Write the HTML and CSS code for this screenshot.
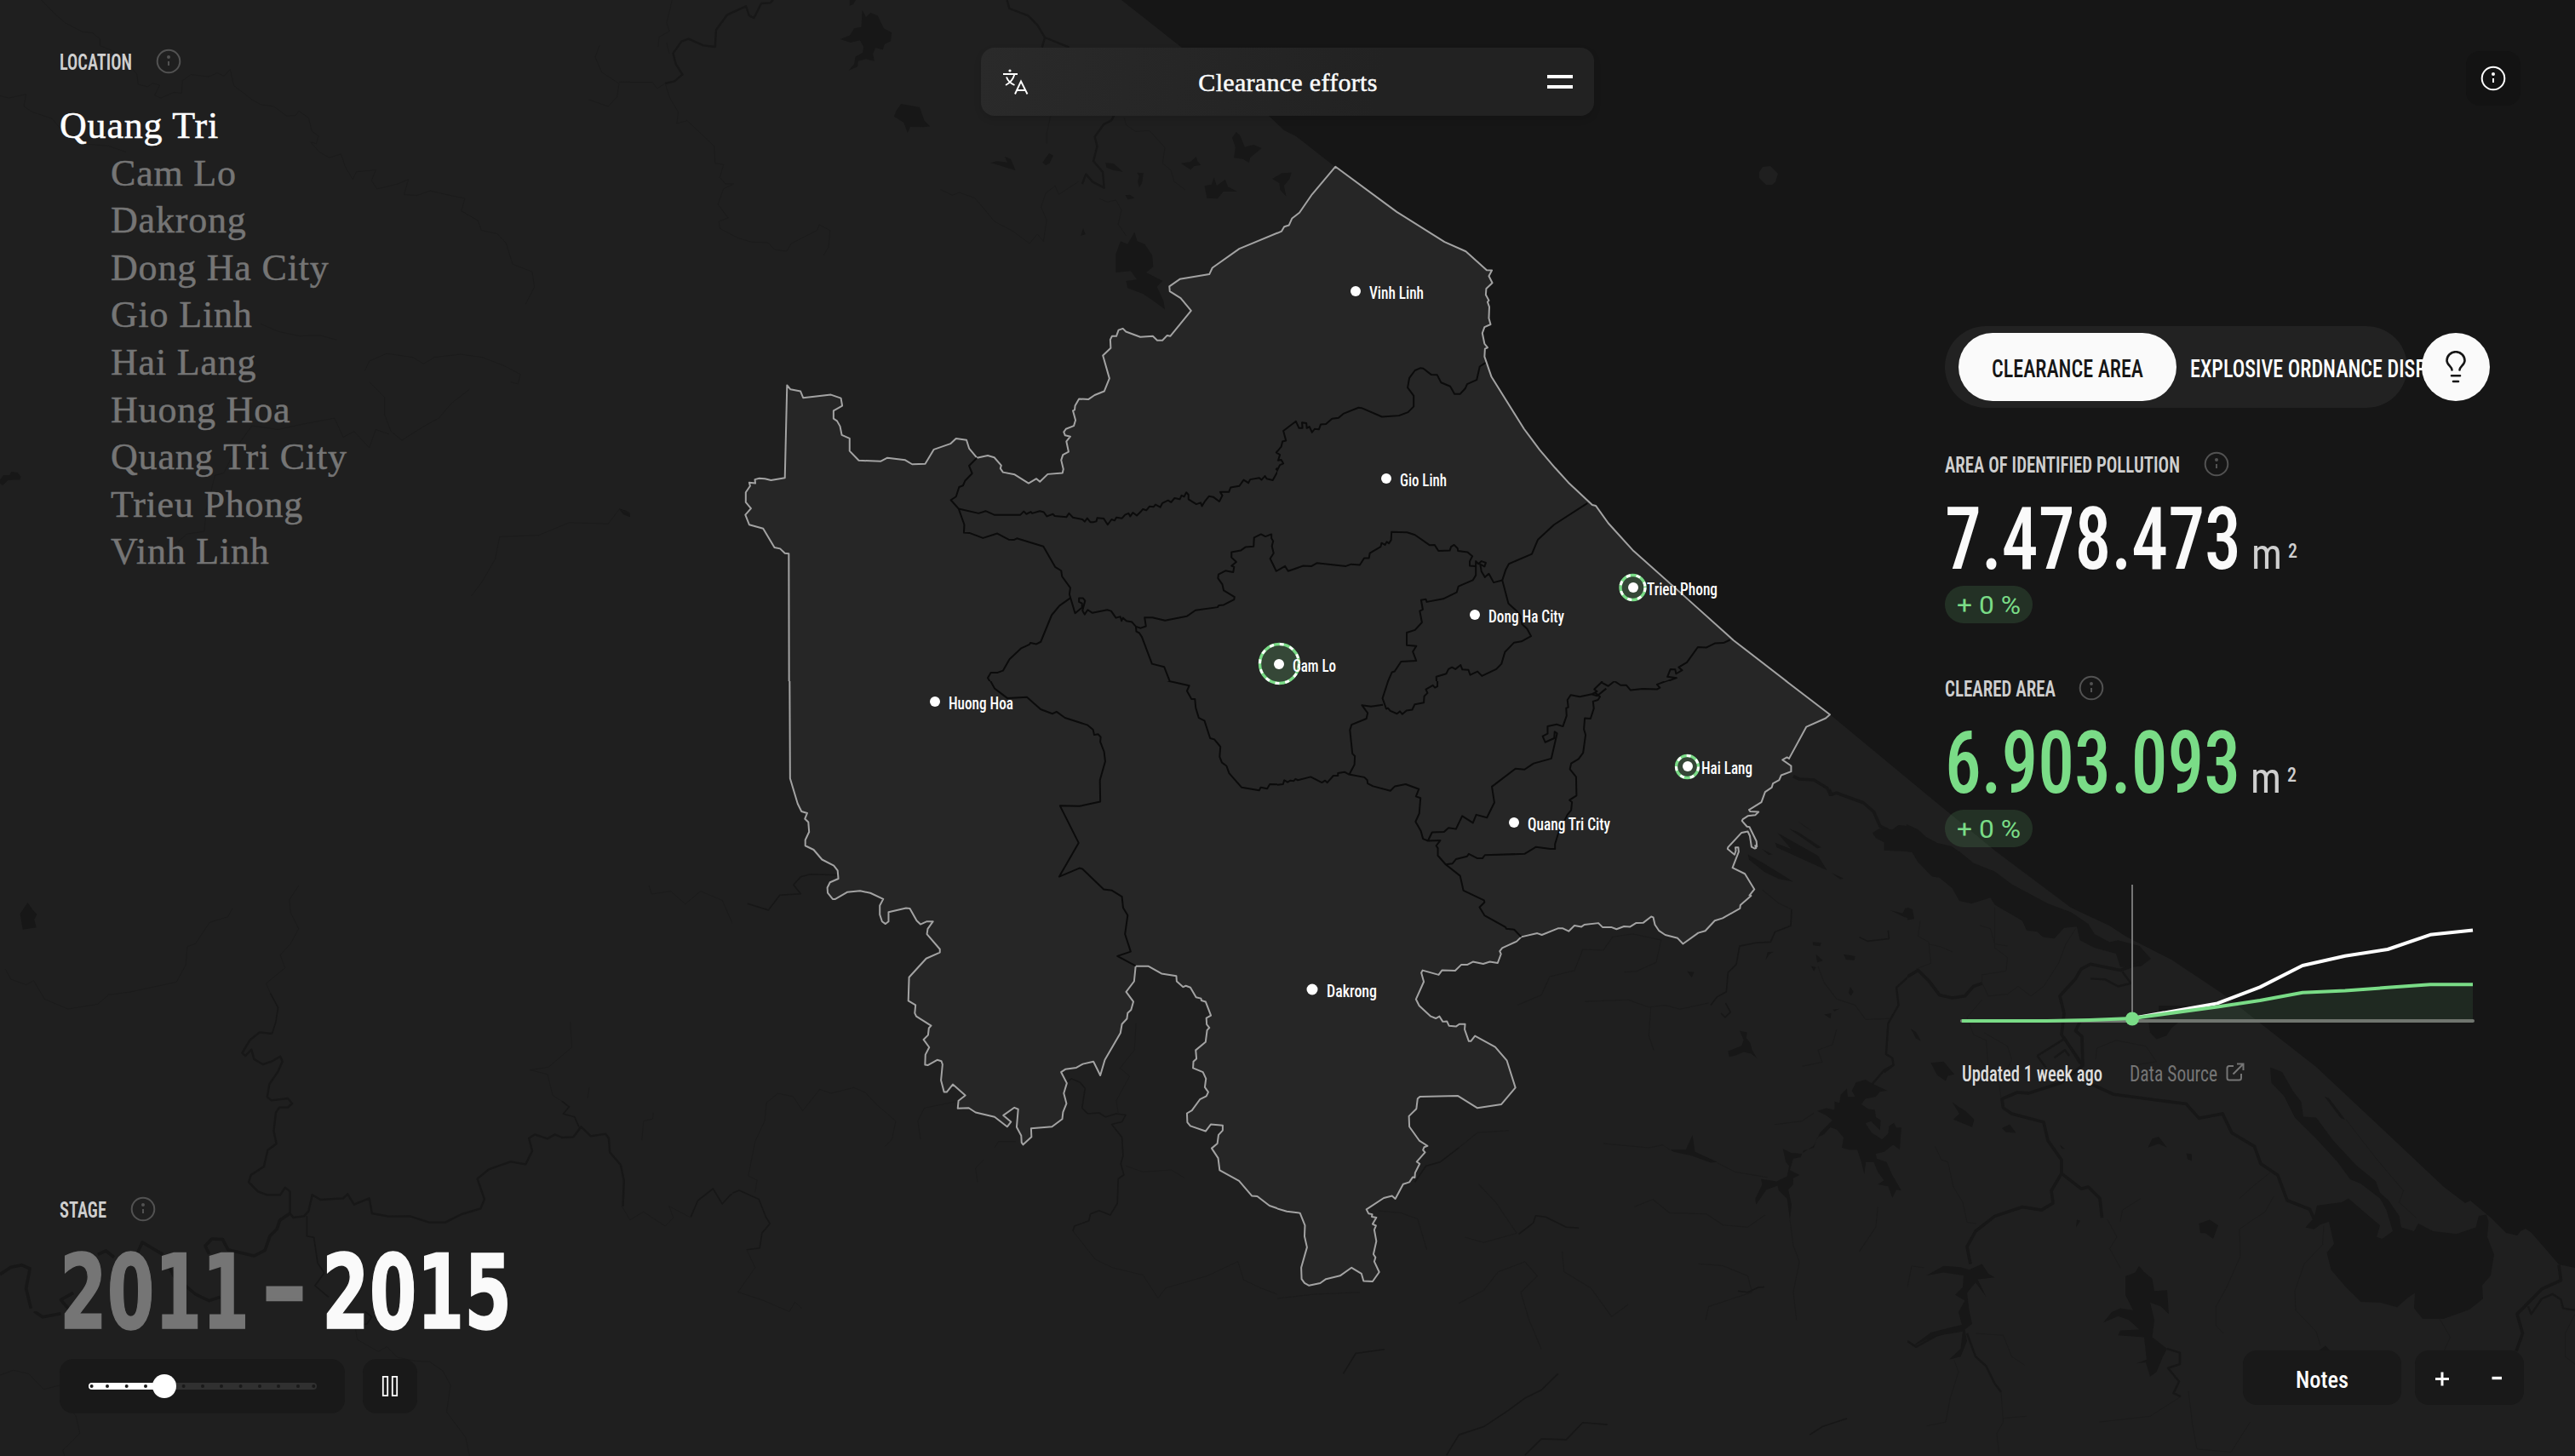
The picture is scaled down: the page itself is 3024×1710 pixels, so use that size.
FILE: index.html
```html
<!DOCTYPE html>
<html lang="en">
<head>
<meta charset="utf-8">
<title>Clearance efforts</title>
<link rel="stylesheet" href="styles.css">
</head>
<body>
<div class="app">

<svg class="map" width="3024" height="1710" viewBox="0 0 3024 1710">
  <!-- inland water, north -->
  <svg x="0" y="0" width="740" height="700" viewBox="0 0 1450.4 1568" preserveAspectRatio="none">
    <path class="lake" d="M0 1262L8 1250L22 1250L26 1241L40 1243L48 1254L46 1262L30 1262L18 1264L6 1277L0 1272ZM1425 1338L1440 1343L1466 1361L1450 1360L1434 1353Z"/>
    <path class="brook" d="M95 0L125 35L150 60L190 84L212 86L230 102L230 120L262 135L290 160L315 195L318 222L340 228L352 219L368 224L356 250L370 258L400 243L418 245L420 212L440 196L480 202L500 192L516 200L530 182L538 225L580 262L600 275L630 280L660 305L680 304L688 292L710 310L718 345L733 358L728 378L715 374L735 400L758 415L785 405L795 440L812 472L820 452L865 447L855 475L868 497L915 484L940 472L930 512L960 514L990 502L1040 515L1070 522L1062 555L1100 580L1108 606L1145 615L1165 640L1180 695L1225 715L1230 755L1210 800"/>
    <path class="brook" d="M0 252L20 258L60 248L55 280L75 295L120 312L140 340L190 378L250 384L290 400M600 852L640 872L690 884L735 882L775 894M840 975L850 950L890 930L950 940L975 957L1000 940L1060 932L1110 940L1160 962L1198 985L1192 1010L1175 1005M850 1005L885 1045L885 1090L900 1135L925 1158L975 1122L1010 1100L1040 1060L1080 1025M545 1175L580 1120L640 1130L700 1115L770 1100L790 1150L815 1135L850 1178L865 1130L895 1142M1085 1568L1110 1530L1140 1470L1150 1412L1240 1408L1310 1375L1400 1378L1425 1340L1470 1361L1520 1355L1540 1325L1515 1310L1505 1270L1530 1245L1568 1243M1380 120L1370 150L1385 190L1425 220L1420 255L1400 280L1355 262M1425 216L1500 215L1515 232"/>
    <path class="brook" d="M410 1425L430 1405L470 1398L475 1340L495 1250L515 1245L545 1175"/>
  </svg>
  <svg x="740" y="0" width="860" height="700" viewBox="0 0 1568 2100" preserveAspectRatio="none">
    <path class="river" d="M306 0L300 10L281 12L265 63L255 55L248 22L208 52L184 106L182 165L157 160L125 137L110 146L92 188L98 226L112 262L95 286L75 294"/>
    <path class="river" d="M807 0L812 30L852 55L872 88L888 132L940 167M888 132L882 167M1036 408L1030 425L1014 438L995 482L1000 515L992 568L1012 606L1015 662L990 640L976 614L968 648"/>
    <path class="brook" d="M0 290L48 290L58 312L75 294L85 345L103 395L100 435L122 425L180 515L182 575L200 580L192 625L204 648L222 648L200 665L188 720L210 768L190 780L192 805L230 838L260 853L295 855L310 880L335 885L345 858L400 812L405 792L428 812L425 870L414 900M665 668L690 688L705 678L738 698L755 730L780 780L820 815L855 858L872 825L885 850L892 775L880 730L890 680L910 655L918 685L960 640M1058 415L1062 440L1082 463L1112 460L1145 520L1140 575L1158 600L1165 640L1188 668M1005 700L1022 712L1040 705L1052 740L1045 790L1062 830M900 410L892 470L892 505M90 0L78 80L84 110L62 130L60 165M78 150L84 190"/>
    <path class="lake" d="M497 35L505 60L515 45L530 55L543 100L560 115L558 145L545 155L541 175L525 168L520 190L523 215L505 208L488 215L487 235L468 248L480 225L482 200L498 185L500 165L492 142L472 150L450 138L470 125L480 100L495 95ZM470 0L483 0L478 15L470 20ZM580 366L600 372L620 378L630 425L642 445L628 448L600 447L594 468L586 432L565 410L570 390ZM802 552L815 560L825 600L808 592L785 580L772 574L785 568L808 572ZM897 540L906 548L898 575L890 582L883 572ZM1018 574L1035 576L1055 605L1035 600L1020 590ZM1085 608L1099 610L1096 645L1090 660L1087 640L1090 620ZM1060 688L1070 686L1080 698L1066 703ZM1298 465L1306 478L1316 518L1335 510L1352 522L1328 555L1325 573L1312 560L1293 556L1296 520L1289 485ZM1180 575L1200 570L1212 552L1215 568L1222 582L1208 585L1200 598L1188 585ZM1250 625L1256 655L1274 632L1280 658L1300 675L1270 675L1258 700L1235 698L1230 655L1245 650ZM1375 630L1396 610L1416 608L1412 630L1400 655L1405 692L1392 670L1390 645ZM970 805L975 826L965 830Z"/>
    <path class="lake" d="M1080 818L1086 850L1102 860L1118 900L1120 940L1105 960L1140 990L1128 1010L1142 1060L1145 1090L1120 1060L1098 1035L1065 1015L1062 990L1085 985L1072 955L1040 960L1040 895L1050 850L1065 860Z"/>
  </svg>
  <svg x="0" y="1040" width="860" height="500" viewBox="0 0 1348.5 1500" preserveAspectRatio="none">
    <path class="lake" d="M51 60L60 85L68 102L63 120L67 148L42 155L37 100Z"/>
    <path class="brook" d="M550 0L533 50L535 95L550 152L535 205L516 245L525 290L490 345L498 380M428 80L420 110L386 130L360 205L345 215L342 280L325 340L240 375L200 385L180 418L125 435L82 400L62 335L48 350L20 330L10 295M1050 480L1053 570L1010 640L976 650L1008 665L1018 740L1035 760M1085 710L1082 750M1203 800L1202 822L1185 830L1182 898M1145 1130L1160 1178L1185 1150L1225 1200L1240 1170L1232 1130L1270 1168M1195 0L1200 30L1235 20L1262 65L1290 20L1330 52L1355 160L1368 150L1365 70L1400 90"/>
    <path class="river fine" d="M498 380L512 430L508 480L501 522M565 1165L565 1235L578 1240L585 1330L597 1365L580 1410L605 1450M1035 760L1048 780L1037 805L1058 815L1066 850"/>
    <path class="river" d="M501 522L478 517L460 545L446 590L452 600L463 578L468 612L484 630L500 620L516 602L520 620L512 655L496 700L492 745L500 757L530 750L538 768L530 782L514 782L508 800L504 865L509 910L493 932L486 990L462 1020L458 1045L475 1078L492 1090L516 1090L525 1064L534 1078L534 1155L540 1170L560 1165L568 1148L575 1090L590 1107L632 1102L640 1087L652 1124L680 1102L685 1155L715 1166L755 1165L790 1187L820 1187L850 1158L885 1138L892 1105L879 1033L900 1000L940 973L968 982L980 935L974 890L985 877L1008 892L1022 877L1035 888L1056 886L1070 850L1088 883L1115 875L1121 890L1123 940L1143 985L1149 1040L1147 1130"/>
    <path class="river bold" d="M534 1155L515 1180L510 1210L497 1235L488 1285L468 1305L420 1283L410 1247L390 1245L378 1270L385 1298M0 1370L20 1345L40 1337L55 1350L48 1420L57 1490M180 1300L195 1287L210 1310M252 1300L262 1257L300 1300M308 1330L320 1375L360 1440L385 1463L405 1450M130 1500L112 1460L135 1435"/>
    <path class="river fine" d="M1272 1168L1285 1110L1313 1068L1330 1122L1345 1090L1362 1075"/>
  </svg>
  <svg x="860" y="1000" width="640" height="550" viewBox="0 418 1433.6 1150" preserveAspectRatio="none">
    <path class="river fine" d="M280 476L205 474L180 480L161 500L180 522L125 525L95 562L40 546M0 1257L18 1250L70 1272L88 1315L99 1332L78 1355L72 1392L38 1396M880 985L892 976L915 985L928 1000L920 1048L935 1062L965 1060L982 1070L1010 1062L1035 1065L1025 1082L998 1088L1025 1120L1028 1165L1022 1185L1030 1212L1015 1222L1013 1282L994 1311L965 1300L942 1308L938 1325L900 1338L896 1350"/>
    <path class="brook" d="M896 1350L955 1420L1000 1440L1080 1458L1120 1515L1140 1490L1250 1460L1330 1425L1345 1470L1390 1490L1433 1505M1062 840L1058 905L1020 950L1045 970L1010 1030L1015 1060M60 1255L65 1225L42 1215L60 1130L85 1080L90 1035L120 1012L160 1020L185 1055L230 1002L260 1012L320 998L350 1010L380 1040L430 1080L420 1125L402 1142M495 1125L488 1080L505 1048L590 1032M745 1130L700 1130L690 1145M662 1175L640 1195L645 1230M1035 1190L1080 1205L1155 1200L1190 1220M38 1396L60 1440L15 1500L80 1520L150 1548L165 1525L183 1540"/>
  </svg>
  <svg x="1500" y="860" width="740" height="850" viewBox="0 125 1526.6 1777" preserveAspectRatio="none">
    <path class="river bold" d="M1250 233L1265 240L1300 242L1332 262L1340 278L1355 274L1420 298L1445 320L1460 355L1480 365"/>
    <path class="lake" d="M1442 372L1458 362L1490 364L1505 353L1530 355L1530 418L1470 415L1470 395L1450 385ZM1340 263L1348 280L1336 282ZM1212 372L1310 428L1332 464L1262 432L1210 408L1206 396L1245 412ZM1240 362L1262 370L1318 408L1308 410ZM1140 425L1175 445L1212 468L1250 492L1215 485L1180 468L1143 438ZM1342 470L1372 484L1364 486ZM1260 343L1297 368L1280 358ZM1175 412L1200 425L1190 426Z"/>
    <path class="lake" d="M1485 562L1515 570L1522 556L1540 560L1544 588L1518 578ZM1297 640L1318 642L1315 650L1298 648ZM1372 670L1400 675L1398 685L1378 683ZM1305 670L1322 686L1308 690ZM1293 699L1305 702L1300 712ZM993 712L1010 714L1004 727ZM1388 750L1396 762L1390 772L1384 765ZM1325 818L1342 815L1340 828ZM1346 806L1362 804L1350 810ZM1535 858L1550 860L1560 880L1545 880ZM1183 684L1188 665L1203 664L1192 670Z"/>
    <path class="lake" d="M1120 858L1138 862L1136 876L1146 888L1150 905L1162 925L1148 914L1130 910L1112 918L1095 922L1092 908L1125 895L1130 880ZM930 1136L950 1150L990 1150L1006 1114L1012 1155L1066 1180L1050 1182L1005 1165L960 1155Z"/>
    <path class="lake" d="M1402 985L1425 978L1442 988L1478 1005L1460 1008L1450 1020L1425 1025L1415 1038L1432 1050L1448 1052L1450 1070L1462 1078L1460 1102L1438 1080L1425 1085L1440 1108L1465 1125L1480 1110L1482 1092L1494 1084L1500 1096L1512 1095L1508 1150L1492 1138L1470 1155L1450 1160L1452 1172L1476 1180L1490 1212L1512 1250L1500 1248L1490 1268L1480 1240L1455 1235L1470 1225L1455 1205L1445 1180L1426 1180L1422 1210L1415 1180L1405 1150L1385 1150L1368 1145L1372 1120L1355 1100L1340 1095L1325 1112L1308 1120L1300 1145L1275 1152L1268 1168L1250 1172L1242 1200L1265 1212L1250 1220L1250 1235L1238 1248L1246 1285L1242 1322L1235 1270L1215 1250L1212 1238L1185 1248L1160 1285L1158 1270L1175 1235L1172 1222L1210 1228L1235 1215L1240 1190L1232 1180L1225 1148L1245 1158L1270 1160L1300 1140L1315 1108L1345 1078L1330 1066L1308 1055L1330 1048L1350 1052L1350 1032L1362 1035L1365 1015L1380 1000L1382 1020L1400 1020L1392 1005Z"/>
    <path class="river" d="M1470 960L1493 942L1490 925L1475 915L1480 840L1505 795L1500 752L1540 715L1568 712M1442 988L1470 955L1493 942"/>
    <path class="river fine" d="M1410 628L1430 638L1482 632L1480 612M1050 795L1065 775L1088 762L1092 715L1112 695L1120 650L1160 642L1195 640L1206 615L1244 600L1246 560M1075 815L1085 825L1098 812L1086 790M585 1357L620 1330L626 1312L650 1315L700 1340L730 1342M333 1230L360 1190L395 1180L440 1145M1116 1497L1140 1500L1165 1488L1180 1487"/>
    <path class="brook" d="M1246 560L1215 545L1175 512M582 795L640 770L660 725L720 710L740 658L790 660L812 628L860 620L930 635L918 690L870 712L840 714M745 786L850 782L900 800L940 795L975 805L1045 790M905 800L900 870L912 905M1310 700L1325 740L1355 780L1400 795L1425 830L1485 828M1355 855L1345 892L1310 905L1320 935L1272 945M1205 1088L1270 1080L1300 1060M790 1135L900 1145L935 1138M1066 1182L1110 1205L1188 1218M440 1145L485 1108L560 1103M488 1235L530 1280L580 1355L500 1378L455 1365M865 1290L910 1272L950 1305L1040 1308L1080 1335L1140 1340L1182 1310M1242 1322L1250 1385L1265 1425L1250 1500L1258 1568M1455 1290L1450 1340L1410 1400M1038 1568L1045 1535L1150 1500L1140 1460L1080 1435L1020 1430M440 1527L500 1495L535 1450L600 1425L630 1460L590 1500L610 1568L640 1640M690 1400L695 1450L760 1490L810 1560L850 1530M245 1300L300 1305L340 1320L362 1395M0 1515L90 1505L200 1500"/>
    <path class="river fine" d="M410 1900L440 1850L500 1830L560 1790L600 1760L640 1740L680 1700M600 1900L640 1860L700 1862L740 1820L800 1825M160 1700L190 1650L260 1640M1290 1850L1320 1830L1380 1810"/>
  </svg>
  <svg x="2240" y="1000" width="784" height="710" viewBox="0 0 1568 1568" preserveAspectRatio="none">
    <path class="lake" d="M10 0L122 0L155 30L205 52L245 85L330 135L385 158L425 188L440 215L475 235L495 230L545 245L572 278L548 298L500 300L490 265L440 250L405 230L398 195L368 198L345 226L318 222L305 208L280 205L270 180L205 138L195 120L150 135L122 128L105 95L75 68L58 65L25 28Z"/>
    <path class="river bold" d="M545 290L500 308L430 292L408 305L395 330L358 375L368 420L362 475L412 555L360 600L285 627L258 625L222 642L225 665L245 680L320 702L330 750L362 800L362 835L408 875L425 870L452 900L457 950M362 835L338 880L342 912L315 930L270 922L205 946L160 985L140 1025L148 1070M0 325L25 308L50 335L75 372L105 380L135 375L155 350L175 342M412 555L410 480L395 465L405 442"/>
    <path class="river bold" d="M425 600L485 630L655 655L685 692L740 680L762 730L815 765L830 810L870 840L892 905L945 928L960 965M1530 1072L1535 1112L1490 1135L1432 1200L1445 1250L1430 1296"/>
    <path class="river" d="M430 330L465 332L495 350L525 342L505 312M305 530L370 485L405 550M305 530L325 560M345 535L370 515L380 530M1458 1180L1465 1200L1490 1160L1515 1148L1535 1162L1540 1185L1568 1190M0 1270L20 1285L70 1255L125 1235M140 1250L160 1310L185 1335L205 1380L220 1402M610 1290L640 1300L640 1330L612 1340L638 1375L625 1405L642 1414"/>
    <path class="lake" d="M852 560L880 572L905 620L925 650L930 688L960 690L975 712L1000 750L1055 815L1100 855L1110 885L1130 905L1155 945L1160 975L1190 985L1200 965L1235 985L1290 992L1335 975L1342 945L1360 942L1365 960L1362 1000L1378 1045L1370 1100L1350 1125L1352 1160L1320 1188L1260 1212L1210 1212L1190 1185L1192 1145L1175 1158L1150 1182L1110 1170L1065 1168L1030 1130L995 1085L985 1040L1002 1018L990 960L970 968L955 980L935 975L955 950L962 918L1020 910L1036 900L1110 970L1102 1000L1115 1005L1140 985L1125 930L1110 900L1065 862L1040 850L1010 805L960 745L910 690L885 635L855 600Z"/>
    <path class="lake" d="M980 636L990 640L1028 695L1018 692ZM590 400L660 400L660 412L590 418ZM566 440L640 440L620 458L608 478L585 487L570 470ZM55 548L85 545L110 578L95 582L90 595L70 580ZM105 650L120 662L135 672L157 695L152 715L108 695L122 680ZM222 718L240 708L255 730L232 728ZM565 768L575 745L590 740L610 768L590 758ZM655 783L668 785L668 803L658 798ZM685 965L710 955L730 970L718 1005L700 990L688 990ZM398 955L406 958L396 975ZM8 460L20 468L32 492L20 485ZM358 760L370 772L362 770ZM0 145L12 150L16 175L0 178ZM967 1294L982 1282L992 1294Z"/>
    <path class="lake" d="M544 1075L555 1090L575 1108L580 1140L610 1138L614 1200L595 1180L570 1170L580 1215L575 1260L610 1290L600 1310L585 1350L570 1362L560 1325L538 1328L562 1318L556 1260L495 1255L500 1242L545 1240L520 1215L495 1205L460 1222L480 1195L500 1185L530 1190L512 1150L512 1102L535 1092Z"/>
    <path class="lake" d="M45 1100L85 1075L125 1078L145 1085L175 1070L190 1095L205 1105L165 1110L185 1155L160 1118L140 1145L145 1190L152 1225L135 1240L140 1270L125 1310L98 1318L125 1290L130 1245L60 1258L10 1285L55 1248L100 1235L128 1228L120 1195L135 1165L112 1150L130 1130L132 1100L85 1092Z"/>
    <path class="brook" d="M65 765L80 800L95 805L108 870L130 910L140 962L162 965M205 145L205 250L235 275L232 310L175 320L175 340L190 375L235 370L260 350L290 375L320 350L355 290L372 240L395 200M170 192L195 200L205 240L235 245M30 180L25 220L50 235L55 290L20 305M50 240L80 248L105 260M175 385L140 430L155 475L185 490L190 560L215 600L220 640M180 470L235 505L245 540L232 570M442 540L445 510L490 490L560 505L585 545L530 555M1030 695L1100 795L1165 880L1155 910L1195 950M855 830L810 870L780 900M860 895L840 935L805 960L780 980L782 1050L750 1130L725 1180L725 1230L742 1250M978 970L975 1020L932 1070L910 1140L912 1190L960 1245L970 1282M470 955L492 1000L475 1030L500 1080M548 900L505 930L500 960M45 1490L90 1480L100 1420L120 1350L110 1320M220 1402L225 1480L210 1510L215 1560M160 1250L225 1255L245 1310L275 1332M642 1414L570 1465L450 1480M660 1400L670 1490L680 1550L760 1558L805 1480M1250 1212L1275 1260L1260 1296M1568 1200L1545 1250L1545 1310L1568 1330M280 1465L225 1470M0 1130L10 1075L40 1080"/>
  </svg>
  <svg x="0" y="1540" width="860" height="170" viewBox="0 480 1926.4 510" preserveAspectRatio="none">
    <path class="river bold" d="M90 480L112 500L160 488M540 480"/>
    <path class="brook" d="M0 705L35 688L75 700L115 755L160 740L168 795L200 850L210 910L165 970L170 990M935 540L940 580L995 622L1018 605L1045 642L1090 655L1130 658L1165 690L1185 740L1175 835L1225 925L1235 990"/>
    <path class="river fine" d="M900 430L950 470L978 500L965 525L935 530"/>
  </svg>

  <path class="sea" d="M1317 0L1388 56L1490 136L1508 153L1522 160L1568 196L1600 420L1740 480L2050 800L2149 839L2260 931L2344 1000L2432 1066L2477 1087L2497 1100L2550 1127L2610 1167L2720 1253L2800 1328L2870 1394L2895 1413L2901 1410L2925 1430L2943 1448L2956 1451L2960 1446L2966 1443L2973 1448L3005 1485L3024 1489V0Z"/>
  <path class="lake" d="M2239 968L2252 974L2262 983L2275 990L2292 994L2302 1001L2244 1001L2239 1000Z"/>
  <path class="islet" d="M2066 202L2070 196L2079 195L2088 204L2085 214L2081 217L2074 217L2066 209Z"/>

  <!-- province, north-west -->
  <svg x="860" y="160" width="640" height="640" viewBox="0 0 1254.4 1433.6" preserveAspectRatio="none">
    <path class="province" d="M131 1600L130 1098L121 1097L110 1085L97 1082L71 1032L39 1022L30 996L43 979L31 963L31 937L41 920L39 911L53 913L52 903L62 900L75 901L89 905L121 899L126 655L134 666L157 671L163 688L227 680L250 689L253 709L233 722L233 743L241 749L248 763L252 786L270 795L270 828L291 853L342 855L357 846L398 852L414 863L444 862L464 824L502 809L515 795L539 799L545 821L563 846L588 840L603 845L619 866L617 874L623 884L650 890L682 913L700 901L708 909L726 889L760 886L762 876L757 852L761 838L774 830L769 803L778 790L766 787L763 778L768 770L786 762L790 747L784 722L788 720L789 709L798 691L820 692L834 681L856 671L868 637L853 577L871 557L870 535L874 526L884 526L889 510L899 506L906 514L939 528L968 526L978 537L990 537L1001 524L1008 526L1056 459L1032 426L1007 408L1006 395L1030 376L1098 363L1105 346L1167 296L1264 250L1270 238L1281 234L1288 216L1304 201L1336 150L1389 80L1700 80L1700 1600Z"/>
    <path class="district" d="M563 846L545 867L552 887L536 906L531 919L522 923L515 948L503 957L521 980L567 992L583 986L603 996L663 996L671 987L677 994L687 988L690 992L708 986L717 989L724 1000L738 994L742 999L769 1002L775 992L784 1003L806 1008L811 1014L817 1005L824 1015L832 1015L838 1013L840 1004L855 1006L864 1022L873 1008L880 1011L884 1003L897 1005L904 996L912 992L916 1000L922 990L931 998L940 988L945 981L953 984L960 974L970 975L974 969L985 976L990 965L1003 958L1010 963L1018 952L1030 955L1034 945L1040 948L1045 937L1050 943L1050 955L1068 968L1078 964L1081 973L1088 960L1097 947L1107 949L1121 961L1128 945L1123 936L1143 936L1147 924L1167 920L1177 904L1188 912L1192 903L1213 899L1218 904L1226 894L1230 901L1244 905L1256 880L1252 876L1268 861L1263 851L1256 853L1260 838L1252 832L1263 817L1266 803L1274 801L1268 775L1298 750"/>
    <path class="district" d="M521 980L534 1022L533 1043L547 1044L577 1057L610 1045L636 1061L648 1062L655 1058L716 1079L743 1133L757 1143L759 1158L778 1188L776 1205L789 1255L805 1240L805 1229L798 1225L798 1215L807 1215L812 1222L806 1248L811 1258L818 1246L829 1254L863 1246L872 1249L883 1267L893 1264L896 1275L899 1267L907 1275L920 1278L929 1290L940 1294L952 1289L949 1266L967 1266L996 1274L1046 1263L1066 1247L1117 1239L1120 1234L1131 1233L1155 1219L1156 1212L1131 1195L1128 1179L1118 1163L1119 1153L1135 1143L1153 1147L1155 1133L1149 1130L1160 1120L1149 1108L1149 1094L1170 1090L1181 1081L1200 1079L1201 1056L1217 1047L1227 1053L1241 1047L1241 1058L1245 1065L1242 1078L1246 1097L1238 1111L1252 1144L1272 1131"/>
    <path class="district" d="M778 1215L753 1235L735 1260L710 1330L700 1336L686 1333L684 1337L665 1347L638 1376L623 1406L611 1411L595 1411L588 1425L602 1451L633 1477M929 1290L930 1303L937 1307L943 1318L966 1388L994 1396L1007 1434L1051 1445"/>
  </svg>
  <!-- province, north-east -->
  <svg x="1500" y="160" width="800" height="640" viewBox="0 0 1568 1433.6" preserveAspectRatio="none">
    <path class="district" d="M470 620L540 745L570 795"/>
    <path class="province" d="M-90 295L0 255L10 250L16 238L27 234L34 216L51 201L80 153L134 80L275 199L385 278L434 303L482 352L494 353L487 368L495 386L481 401L480 417L487 432L484 436L488 449L487 479L491 495L477 502L472 518L477 546L484 556L478 559L477 580L493 633L568 770L604 825L639 872L670 911L725 970L733 972L762 1018L820 1091L938 1211L1050 1326L1272 1522L1272 1700L-90 1700Z"/>
    <path class="district" d="M-5 890L6 865L14 861L9 851L2 853L6 838L-2 832L9 817L12 803L20 801L14 775L43 750L50 768L58 768L57 753L67 755L68 768L74 764L80 779L86 770L96 771L100 758L112 757L126 743L141 741L152 730L187 714L194 715L241 738L280 735L301 726L314 711L314 683L300 661L304 636L317 616L329 610L336 611L354 627L368 628L377 648L398 658L408 678L421 678L433 663L437 652L459 641L466 606L479 596"/>
    <path class="district" d="M-2 1144L18 1131L25 1144L60 1130L79 1131L91 1123L158 1131L170 1126L190 1128L200 1110L211 1110L213 1097L238 1080L240 1070L248 1075L252 1067L257 1071L262 1062L263 1041L299 1042L317 1049L351 1076L362 1075L371 1091L397 1090L400 1080L407 1075L415 1084L416 1091L438 1094L449 1105L443 1118L443 1130L457 1131L457 1118L463 1125L470 1118L480 1122L477 1132L467 1126L470 1145L478 1160L487 1151L498 1174L518 1168"/>
    <path class="district" d="M714 965L637 1022L600 1061L586 1099L533 1125L526 1140L518 1168L532 1229L552 1250L560 1262L563 1283L575 1296L584 1315L562 1329L545 1332L524 1357L516 1388L504 1402L471 1420L461 1408L444 1417L440 1404L426 1403L422 1391L410 1402L402 1397L394 1402L389 1414L366 1422L367 1448L347 1451L339 1468M242 1477L246 1457L264 1410L270 1408L285 1382L320 1380L312 1356L320 1341L298 1339L298 1306L317 1299L333 1279L328 1249L335 1245L331 1220L342 1218L344 1225L382 1217L413 1200L417 1184L450 1168L457 1155L457 1131M1042 1325L1027 1333L1007 1334L988 1345L968 1344L943 1384L924 1397L932 1405L918 1414L916 1403L905 1402L898 1422L919 1425L878 1442"/>
  </svg>
  <!-- province, south-west -->
  <svg x="860" y="800" width="640" height="750" viewBox="0 0 1433.6 1568" preserveAspectRatio="none">
    <path class="province" d="M150 -150L152 239L172 301L182 320L197 324L191 338L200 346L202 370L192 390L192 404L214 414L236 438L267 453L277 465L279 485L257 494L250 507L251 520L264 535L271 535L302 518L336 515L363 520L397 535L388 551L388 573L394 590L403 596L411 590L411 567L457 557L467 558L485 588L495 597L512 590L528 590L514 608L512 621L546 658L546 666L510 681L465 727L463 785L482 795L480 815L484 823L523 846L517 852L515 869L503 880L518 899L508 917L507 942L514 943L539 930L550 933L553 941L549 980L557 1009L564 1009L580 990L613 1017L595 1030L593 1049L622 1048L640 1059L690 1070L723 1094L733 1082L713 1066L742 1047L752 1051L748 1095L760 1116L761 1133L765 1138L787 1119L786 1098L841 1094L868 1075L870 1058L879 1037L872 1012L880 987L865 960L876 953L905 949L922 940L950 934L968 968L980 930L1021 864L1025 842L1038 829L1040 815L1049 807L1055 787L1036 763L1057 737L1061 700L1095 700L1129 718L1168 724L1169 737L1186 751L1193 748L1205 752L1220 776L1233 779L1234 784L1245 787L1259 821L1247 827L1248 843L1255 851L1249 857L1245 886L1219 906L1221 927L1213 934L1212 950L1238 960L1246 976L1243 997L1252 1009L1247 1019L1230 1027L1209 1054L1196 1061L1197 1083L1205 1092L1245 1105L1259 1088L1290 1091L1290 1103L1279 1114L1276 1135L1261 1147L1278 1171L1282 1201L1333 1227L1367 1264L1381 1265L1413 1288L1458 1302L1700 1320L1700 -150Z"/>
    <path class="district" d="M670 -16L690 18L724 42L775 39L811 69L842 80L853 75L875 90L935 108L949 119L952 132L962 130L969 137L968 149L978 173L981 197L967 243L968 296L913 307L862 306L911 397L860 480L913 459L921 461L977 511L999 514L1025 529L1028 556L1040 575L1033 621L1048 664L1013 675L1061 699"/>
    <path class="district" d="M1100 -15L1150 0L1202 11L1196 24L1208 44L1217 44L1219 65L1227 90L1242 97L1257 140L1268 143L1284 161L1282 186L1288 200L1300 208L1307 226L1340 261L1386 268L1390 261L1407 264L1414 253L1441 254L1465 241"/>
  </svg>
  <!-- province, south-east -->
  <svg x="1500" y="800" width="760" height="750" viewBox="0 0 1568 1568" preserveAspectRatio="none">
    <path class="province" d="M-60 1278L0 1295L23 1302L55 1306L67 1336L66 1363L72 1390L58 1440L59 1468L66 1478L77 1484L104 1478L118 1468L152 1460L180 1440L204 1455L209 1473L231 1474L247 1451L235 1425L238 1415L233 1407L240 1375L235 1347L239 1337L231 1333L240 1317L229 1315L230 1309L221 1307L216 1297L258 1269L278 1264L286 1271L305 1235L320 1230L328 1218L333 1219L334 1207L345 1185L338 1180L358 1157L353 1151L356 1144L364 1141L344 1128L320 1094L319 1068L337 1050L340 1025L346 1020L437 1018L485 1048L543 1039L577 998L556 931L528 898L479 871L469 884L464 884L454 855L455 842L441 842L433 848L416 846L411 835L401 836L393 823L384 828L372 823L344 797L336 781L355 738L349 716L352 710L391 721L399 710L431 711L446 696L461 696L474 689L499 694L515 689L534 692L542 670L539 663L545 655L580 639L591 628L630 619L641 623L680 607L692 607L706 614L720 600L737 603L744 598L778 594L788 604L809 604L822 609L840 602L855 603L869 594L887 593L906 578L911 580L915 598L925 613L940 623L970 631L983 645L1020 618L1037 613L1060 588L1079 582L1121 558L1122 550L1148 527L1144 526L1156 511L1133 473L1103 458L1118 419L1117 408L1110 408L1111 416L1108 426L1091 412L1092 408L1125 372L1140 369L1145 380L1149 407L1157 411L1160 410L1158 404L1162 406L1161 393L1144 358L1138 357L1126 343L1128 339L1140 331L1158 329L1166 321L1146 320L1143 316L1173 297L1182 272L1198 261L1201 251L1216 243L1221 231L1245 222L1245 208L1224 193L1235 187L1240 190L1282 112L1329 91L1339 82L1233 0L1000 -180L-60 -180Z"/>
    <path class="district" d="M-5 255L14 253L17 243L25 248L32 244L40 245L44 240L50 243L81 235L108 249L116 244L121 249L136 232L147 232L147 226L163 223L174 229L211 236L218 243L219 251L232 258L274 269L285 258L311 253L343 265L336 283L347 287L344 325L335 345L348 368L353 387L365 392L395 391L385 404L389 410L389 428L408 450L443 478L451 514L501 538L502 543L490 555L502 575L553 604L555 608L574 610L591 628"/>
    <path class="district" d="M256 58L227 62L205 59L219 78L216 92L180 107L176 120L182 178L188 184L187 205L175 228M270 -5L255 42L264 68L268 66L274 73L290 80L297 74L303 81L313 72L327 70L333 57L355 53L356 37L364 29L360 20L377 10L382 16L388 13L388 -5"/>
    <path class="district" d="M365 392L375 371L404 370L415 360L433 363L448 331L474 348L482 328L508 335L526 298L520 259L577 215L599 217L621 202L664 190L678 128L672 124L671 140L649 150L643 135L655 129L655 111L677 106L692 111L701 85L700 66L705 64L703 46L711 34L733 38L762 32L775 25L768 20L785 3L802 12L817 0L832 10L846 10L856 22L885 19L920 20L927 16L920 8L947 -2M762 32L775 36L785 28L797 18M785 3L790 -5"/>
    <path class="district" d="M770 28L782 38L777 46L765 50L767 67L759 92L745 91L743 118L747 132L741 176L730 191L712 202L709 216L724 235L725 281L708 292L714 297L712 317L703 328L682 370L673 400L673 412L662 412L627 407L599 424L503 427L497 435L485 435L464 424L460 430L433 437L424 448L408 450"/>
  </svg>

  <!-- districts -->
  <g class="halo">
    <circle cx="1502.5" cy="779.5" r="23"/><circle cx="1917.5" cy="690" r="14.5"/><circle cx="1981.5" cy="900.5" r="13"/>
  </g>
  <g class="halo-dash">
    <circle cx="1502.5" cy="779.5" r="23"/><circle cx="1917.5" cy="690" r="14.5"/><circle cx="1981.5" cy="900.5" r="13"/>
  </g>
  <g class="pins">
    <circle cx="1592" cy="342" r="6"/><circle cx="1628" cy="562" r="6"/><circle cx="1732" cy="722" r="6"/>
    <circle cx="1918" cy="690" r="6"/><circle cx="1502" cy="780" r="6"/><circle cx="1098" cy="824" r="6"/>
    <circle cx="1982" cy="900" r="6"/><circle cx="1778" cy="966" r="6"/><circle cx="1541" cy="1162" r="6.5"/>
  </g>
  <g class="places cond">
    <text x="1608" y="351" textLength="64" lengthAdjust="spacingAndGlyphs">Vinh Linh</text>
    <text x="1644" y="571" textLength="55" lengthAdjust="spacingAndGlyphs">Gio Linh</text>
    <text x="1748" y="731" textLength="89" lengthAdjust="spacingAndGlyphs">Dong Ha City</text>
    <text x="1934" y="699" textLength="83" lengthAdjust="spacingAndGlyphs">Trieu Phong</text>
    <text x="1518" y="789" textLength="51" lengthAdjust="spacingAndGlyphs">Cam Lo</text>
    <text x="1114" y="833" textLength="76" lengthAdjust="spacingAndGlyphs">Huong Hoa</text>
    <text x="1998" y="909" textLength="60" lengthAdjust="spacingAndGlyphs">Hai Lang</text>
    <text x="1794" y="975" textLength="97" lengthAdjust="spacingAndGlyphs">Quang Tri City</text>
    <text x="1558" y="1171" textLength="59" lengthAdjust="spacingAndGlyphs">Dakrong</text>
  </g>
</svg>

<svg class="defs" width="0" height="0">
  <symbol id="info" viewBox="0 0 32 32">
    <circle cx="16" cy="16" r="13.3" fill="none" stroke="currentColor" stroke-width="2"/>
    <circle cx="16" cy="11" r="2" fill="currentColor"/>
    <path d="M16 16V21" stroke="currentColor" stroke-width="2"/>
  </symbol>
</svg>

<div class="hud">
  <aside class="left">
    <section>
      <div class="caption">
        <svg class="cond label" width="84" height="28"><text x="0" y="24" textLength="85" lengthAdjust="spacingAndGlyphs">LOCATION</text></svg>
        <svg class="info"><use href="#info"/></svg>
      </div>
      <ul class="locations">
        <li class="current">Quang Tri</li>
        <li>Cam Lo</li>
        <li>Dakrong</li>
        <li>Dong Ha City</li>
        <li>Gio Linh</li>
        <li>Hai Lang</li>
        <li>Huong Hoa</li>
        <li>Quang Tri City</li>
        <li>Trieu Phong</li>
        <li>Vinh Linh</li>
      </ul>
    </section>
    <section class="stage">
      <div class="caption">
        <svg class="cond label" width="54" height="28"><text x="0" y="24" textLength="55" lengthAdjust="spacingAndGlyphs">STAGE</text></svg>
        <svg class="info"><use href="#info"/></svg>
      </div>
      <svg class="years" width="600" height="130">
        <text class="from" x="0" y="110" textLength="223" lengthAdjust="spacingAndGlyphs">2011</text>
        <text class="from dash" x="238" y="103" textLength="52" lengthAdjust="spacingAndGlyphs">–</text>
        <text class="to" x="308" y="110" textLength="223" lengthAdjust="spacingAndGlyphs">2015</text>
      </svg>
      <div class="controls">
        <div class="panel slider">
          <svg width="272" height="30" viewBox="102 1613 272 30">
            <rect class="track" x="104" y="1624" width="268" height="8" rx="4"/>
            <rect class="done" x="104" y="1624" width="92" height="8" rx="4"/>
            <g class="ticks">
              <circle cx="107.6" cy="1628" r="2"/><circle cx="126" cy="1628" r="2"/><circle cx="148.7" cy="1628" r="2"/><circle cx="171" cy="1628" r="2"/>
              <circle cx="215.6" cy="1628" r="2"/><circle cx="238" cy="1628" r="2"/><circle cx="260" cy="1628" r="2"/><circle cx="282.6" cy="1628" r="2"/>
              <circle cx="305" cy="1628" r="2"/><circle cx="327" cy="1628" r="2"/><circle cx="350" cy="1628" r="2"/><circle cx="368.3" cy="1628" r="2"/>
            </g>
            <circle class="done" cx="193" cy="1628" r="14"/>
          </svg>
        </div>
        <div class="panel square">
          <svg width="20" height="26" viewBox="0 0 20 26"><path d="M1.8 1.8H7.2V24.2H1.8ZM12.8 1.8H18.2V24.2H12.8Z" fill="none" stroke="#fff" stroke-width="1.8"/></svg>
        </div>
      </div>
    </section>
  </aside>

  <header class="topbar">
    <svg width="30" height="30" viewBox="0 0 30 30"><g fill="none" stroke="#fff" stroke-width="1.9"><path d="M0 6H17M13.5 6C12 11.5 8 16.5 3 19M4 9.5C5.5 14 9 17 13.5 19M14 29.5L21 14.5L28.5 29.5M16 25H26.5"/></g><circle cx="8" cy="2" r="1.6" fill="#fff"/></svg>
    <h1>Clearance efforts</h1>
    <svg width="30" height="16" viewBox="0 0 30 16"><path d="M0 2H30M0 14H30" stroke="#fff" stroke-width="4"/></svg>
  </header>

  <aside class="right">
    <div class="panel square about"><svg class="info bright"><use href="#info"/></svg></div>

    <div class="tabrow">
      <div class="tabs">
        <div class="tab active"><svg class="cond tabtext" width="178" height="40"><text x="0" y="32" textLength="178" lengthAdjust="spacingAndGlyphs">CLEARANCE AREA</text></svg></div>
        <svg class="cond tabtext" width="290" height="40"><text x="0" y="32" textLength="278" lengthAdjust="spacingAndGlyphs">EXPLOSIVE ORDNANCE DISP</text></svg>
      </div>
      <div class="bulb"><svg width="26" height="38" viewBox="0 0 26 38"><g fill="none" stroke="#161616" stroke-width="2.6" stroke-linecap="round"><path d="M8.5 22.5C8.5 18.5 2.5 16.5 2.5 11.5A10.5 10.3 0 0 1 23.5 11.5C23.5 16.5 17.5 18.5 17.5 22.5M8 29.3H18M10 36H16"/></g></svg></div>
    </div>

    <section class="metric">
      <div class="caption">
        <svg class="cond label" width="275" height="28"><text x="0" y="24" textLength="276" lengthAdjust="spacingAndGlyphs">AREA OF IDENTIFIED POLLUTION</text></svg>
        <svg class="info"><use href="#info"/></svg>
      </div>
      <svg class="cond value" width="440" height="129">
        <text x="0" y="108.5" textLength="348" lengthAdjust="spacingAndGlyphs">7.478.473</text>
        <text class="unit" x="360" y="108.5" textLength="36" lengthAdjust="spacingAndGlyphs">m</text>
        <text class="power" x="403" y="96" textLength="11" lengthAdjust="spacingAndGlyphs">2</text>
      </svg>
      <div class="badge"><svg width="76" height="30"><text x="0" y="25.5" textLength="75" lengthAdjust="spacingAndGlyphs">+ 0 %</text></svg></div>
    </section>

    <section class="metric cleared">
      <div class="caption">
        <svg class="cond label" width="128" height="28"><text x="0" y="24" textLength="130" lengthAdjust="spacingAndGlyphs">CLEARED AREA</text></svg>
        <svg class="info"><use href="#info"/></svg>
      </div>
      <svg class="cond value" width="440" height="129">
        <text class="green" x="0" y="108.5" textLength="347" lengthAdjust="spacingAndGlyphs">6.903.093</text>
        <text class="unit" x="359" y="108.5" textLength="36" lengthAdjust="spacingAndGlyphs">m</text>
        <text class="power" x="402" y="96" textLength="11" lengthAdjust="spacingAndGlyphs">2</text>
      </svg>
      <div class="badge"><svg width="76" height="30"><text x="0" y="25.5" textLength="75" lengthAdjust="spacingAndGlyphs">+ 0 %</text></svg></div>
    </section>

    <svg class="chart" width="640" height="170" viewBox="2284 1036 640 170">
      <path d="M2504 1039V1196" stroke="#757575" stroke-width="2"/>
      <path d="M2504 1196L2604 1182.5L2654 1175L2704 1165.7L2754 1163.5L2804 1159.8L2854 1156.2H2904V1199H2504Z" fill="#7adc87" fill-opacity=".1"/>
      <path d="M2304 1199H2904" stroke="#70756f" stroke-width="4" stroke-linecap="round"/>
      <g fill="none" stroke-width="4" stroke-linejoin="round">
        <path d="M2504 1196L2604 1178.4L2654 1159.4L2704 1134L2754 1122.7L2804 1115L2854 1097.8L2904 1092.4" stroke="#fff"/>
        <path d="M2304 1199H2404L2454 1198L2504 1196L2604 1182.5L2654 1175L2704 1165.7L2754 1163.5L2804 1159.8L2854 1156.2H2904" stroke="#7adc87"/>
      </g>
      <circle cx="2504" cy="1196.5" r="8" fill="#7adc87"/>
    </svg>
    <div class="source">
      <svg class="cond note" width="165" height="34"><text x="0" y="26" textLength="165" lengthAdjust="spacingAndGlyphs">Updated 1 week ago</text></svg>
      <svg class="cond note dim" width="103" height="34"><text x="0" y="26" textLength="103" lengthAdjust="spacingAndGlyphs">Data Source</text></svg>
      <svg class="out" width="22" height="22" viewBox="0 0 22 22"><path d="M9 4H4Q1.5 4 1.5 6.500V18Q1.500 20.500 4 20.500H15.500Q18 20.500 18 18V13M13 1.500H20.500V9M20.500 1.500L8.500 13.500" fill="none" stroke="#757575" stroke-width="2"/></svg>
    </div>

    <div class="actions">
      <div class="panel notes"><svg class="cond" width="62" height="36"><text x="0" y="29.500" textLength="62" lengthAdjust="spacingAndGlyphs">Notes</text></svg></div>
      <div class="panel zoom">
        <svg width="64" height="64"><path d="M24 33.500H40M32 25.500V41.500" stroke="#fff" stroke-width="3"/></svg>
        <svg width="64" height="64"><path d="M26.500 32.500H38" stroke="#fff" stroke-width="3.400"/></svg>
      </div>
    </div>
  </aside>
</div>
</div>
</body>
</html>
```
FILE: styles.css
```css
* { box-sizing: border-box; }
body {
  margin: 0;
  background: #1f1f1f;
  color: #fafafa;
}
svg { display: block; flex: none; }
.defs { position: absolute; }
.app {
  position: relative;
  width: 3024px;
  height: 1710px;
  overflow: hidden;
}

/* map */
.map { position: absolute; inset: 0; }
.map svg { overflow: hidden; }
.map path { vector-effect: non-scaling-stroke; }
.lake { fill: #171717; }
.river { fill: none; stroke: #171717; stroke-width: 2.4; stroke-linejoin: round; }
.river.bold { stroke-width: 3.6; }
.river.fine { stroke-width: 1.6; }
.brook { fill: none; stroke: #1b1b1b; stroke-width: 1; stroke-linejoin: round; }
.sea { fill: #161616; }
.islet { fill: #1f1f1f; }
.province { fill: #262626; stroke: #a3a3a3; stroke-width: 2; stroke-linejoin: round; }
.district { fill: none; stroke: #0b0b0b; stroke-width: 2; stroke-linejoin: round; }
.pins { fill: #fff; }
.halo { fill: rgba(122, 220, 135, .18); stroke: #7adc87; stroke-width: 3.4; }
.halo-dash { fill: none; stroke: #fff; stroke-width: 3; stroke-dasharray: 5 7; }
.places { font-size: 20.5px; font-weight: 500; fill: #fff; }

/* type */
.cond {
  font-family: "Roboto Condensed", Roboto, sans-serif;
  font-stretch: 75%;
  overflow: visible;
}
.label { font-size: 25.5px; font-weight: 600; fill: #cfcfcf; }
.tabtext { font-size: 29.5px; font-weight: 500; fill: #fff; }
.note { font-size: 25px; font-weight: 500; fill: #dedede; }
.note.dim { font-weight: 400; fill: #757575; }

/* overlay */
.hud {
  position: relative;
  display: grid;
  grid-template-columns: 1152px 720px 1fr;
  height: 100%;
}
.left {
  display: flex;
  flex-direction: column;
  justify-content: space-between;
  padding: 58px 0 50px 70px;
}
.caption { display: flex; align-items: center; height: 28px; gap: 28px; }
.info { width: 32px; height: 32px; color: #525252; }
.info.bright { color: #fff; }
.locations {
  list-style: none;
  margin: 34px 0 0;
  padding: 0;
  font-family: "Liberation Serif", serif;
  font-size: 44px;
  letter-spacing: .8px;
  line-height: 55.6px;
  color: #757575;
  -webkit-text-stroke: .5px currentColor;
}
.locations li { padding-left: 60px; }
.locations .current { padding-left: 0; color: #fff; }
.years {
  margin: 16px 0;
  overflow: visible;
  font-family: "DejaVu Sans", sans-serif;
  font-weight: 700;
  font-size: 122px;
  stroke-width: 1.6px;
}
.from { fill: #757575; stroke: #757575; }
.dash { stroke-width: 2.4px; }
.to { fill: #fafafa; stroke: #fafafa; }
.controls { display: flex; gap: 21px; }
.panel {
  display: flex;
  align-items: center;
  justify-content: center;
  height: 64px;
  border-radius: 16px;
  background: #191919;
}
.slider { width: 335px; }
.square { width: 64px; }
.track { fill: #303030; }
.done { fill: #fff; }
.ticks { fill: #191919; }

.topbar {
  display: flex;
  align-items: center;
  justify-content: space-between;
  height: 80px;
  margin-top: 56px;
  padding: 0 25px 0 26px;
  border-radius: 16px;
  background: linear-gradient(100deg, #2a2a2a, #222 65%);
  box-shadow: 0 4px 8px rgba(0, 0, 0, .12);
}
.topbar h1 {
  margin: 2px 0 0;
  font: 400 30px "Liberation Serif", serif;
  letter-spacing: .3px;
  -webkit-text-stroke: .5px currentColor;
}

.right {
  display: flex;
  flex-direction: column;
  padding: 60px 60px 60px 412px;
}
.about { align-self: flex-end; margin-right: 4px; background: #131313; }
.tabrow { display: flex; align-items: center; gap: 17px; margin-top: 259px; }
.tabs {
  display: flex;
  align-items: center;
  gap: 16px;
  width: 543px;
  height: 96px;
  flex: none;
  padding: 0 16px;
  border-radius: 48px;
  background: #222;
}
.tab.active {
  display: flex;
  flex: none;
  align-items: center;
  justify-content: center;
  width: 256px;
  height: 80px;
  border-radius: 40px;
  background: #fafafa;
}
.tab.active .tabtext { fill: #161616; }
.bulb {
  position: relative;
  display: flex;
  flex: none;
  align-items: center;
  justify-content: center;
  width: 80px;
  height: 80px;
  border-radius: 50%;
  background: #fafafa;
}
.metric { margin-top: 52px; }
.metric.cleared { margin-top: 62px; }
.value { font-size: 102px; font-weight: 500; fill: #fafafa; }
.green { fill: #7adc87; }
.unit { font-size: 50px; font-weight: 400; fill: #cfcfcf; }
.power { font-size: 24.5px; fill: #cfcfcf; }
.badge {
  display: flex;
  align-items: center;
  justify-content: center;
  width: 103px;
  height: 44px;
  border-radius: 22px;
  background: rgba(122, 220, 135, .14);
  font: 400 29px Roboto, sans-serif;
  fill: #7adc87;
}
.chart { margin-top: 41px; }
.source { display: flex; align-items: center; margin: 38px 0 0 20px; height: 34px; }
.source .dim { margin-left: 32px; }
.out { margin: -4px 0 0 10px; }
.actions {
  display: flex;
  justify-content: flex-end;
  gap: 16px;
  margin-top: auto;
}
.notes { width: 186px; font-size: 27.5px; font-weight: 500; fill: #fff; }
.zoom { width: 128px; }
```
